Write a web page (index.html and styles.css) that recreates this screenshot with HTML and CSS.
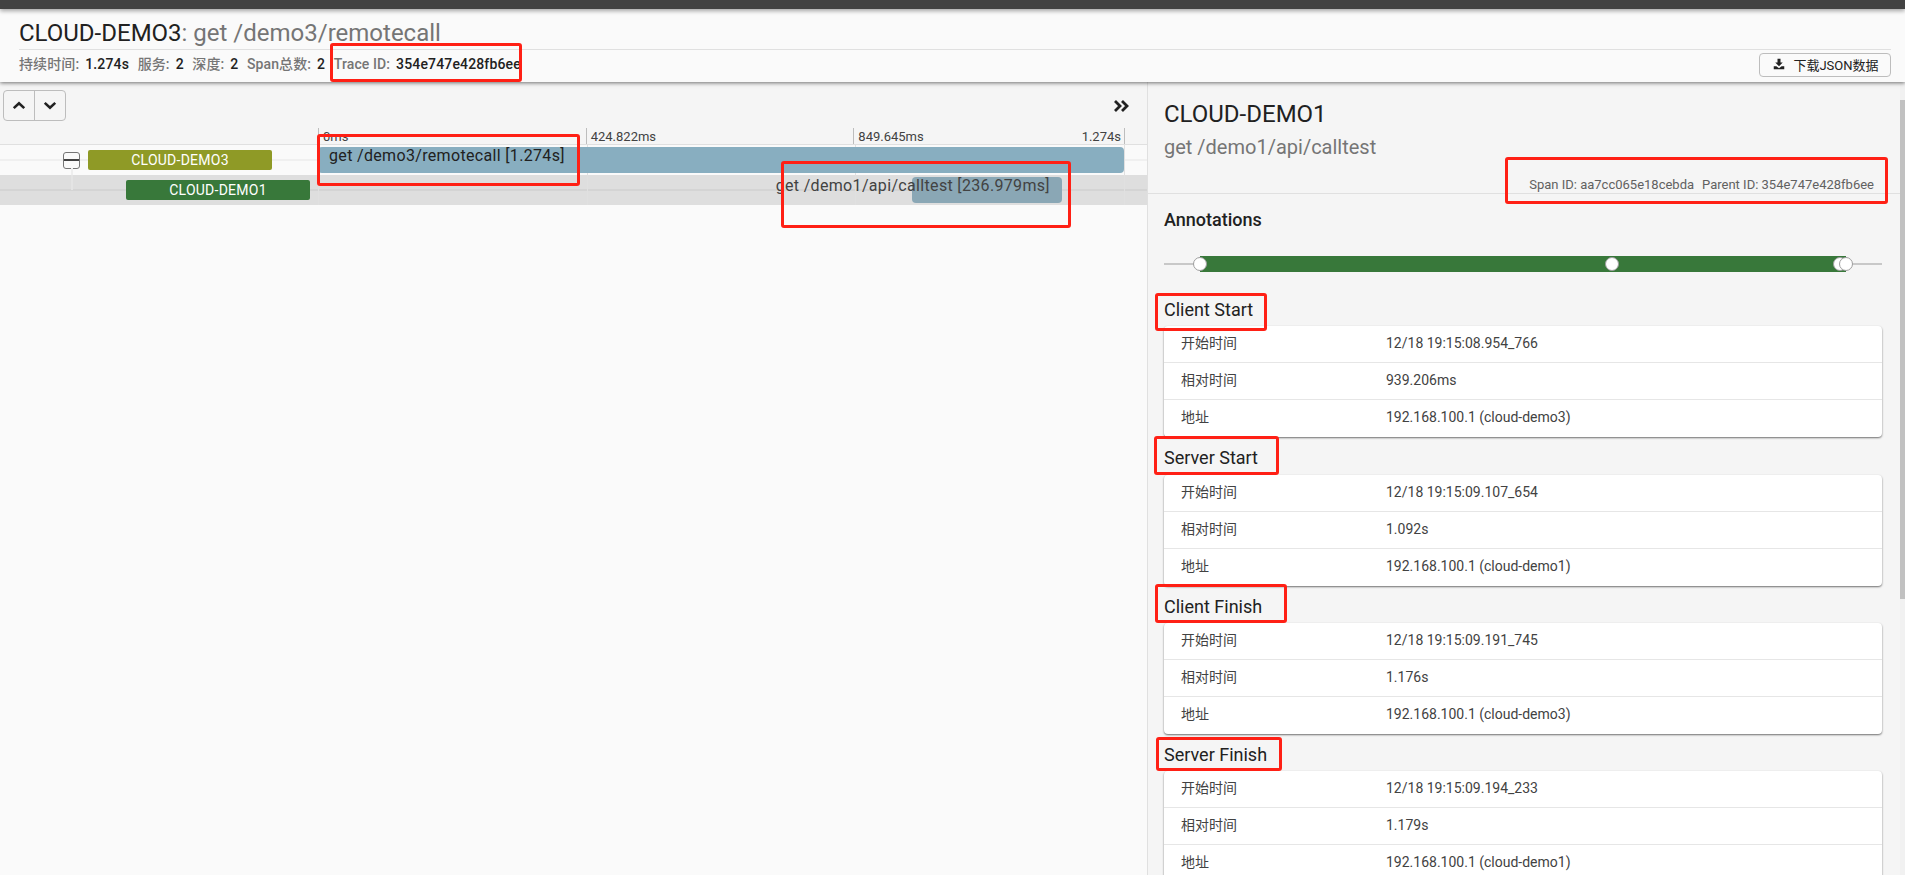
FILE: index.html
```html
<!DOCTYPE html>
<html lang="zh">
<head>
<meta charset="utf-8">
<title>CLOUD-DEMO3: get /demo3/remotecall</title>
<link rel="stylesheet" href="styles.css">
</head>
<body>
<div class="topbar"></div>
<header class="header">
  <h1 class="title"><span class="service">CLOUD-DEMO3</span>: get /demo3/remotecall</h1>
  <div class="meta-row">
    <div class="meta">
      <span class="key">持续时间:</span><b class="val">1.274s</b>
      <span class="key">服务:</span><b class="val">2</b>
      <span class="key">深度:</span><b class="val">2</b>
      <span class="key">Span总数:</span><b class="val">2</b>
      <span class="key">Trace ID:</span><b class="val">354e747e428fb6ee</b>
    </div>
    <button class="download">
      <svg class="dl-icon" viewBox="0 0 16 16"><path d="M6 1h4v5h3l-5 5-5-5h3z"/><path d="M1 11h3.5l3.5 2.5 3.5-2.5H15v4H1z"/></svg>
      下载JSON数据
    </button>
  </div>
</header>
<main class="main">
  <section class="timeline">
    <div class="tl-head">
      <div class="tl-tools">
        <div class="btn-group">
          <button class="nav-btn"><svg viewBox="0 0 16 10"><path d="M2 8l6-5.5L14 8" /></svg></button>
          <button class="nav-btn"><svg viewBox="0 0 16 10"><path d="M2 2l6 5.5L14 2" /></svg></button>
        </div>
        <svg class="collapse" viewBox="0 0 16 14"><path d="M2 2l5 5-5 5M9 2l5 5-5 5"/></svg>
      </div>
      <div class="ruler">
        <div class="tick">0ms</div>
        <div class="tick">424.822ms</div>
        <div class="tick tick-last"><span>849.645ms</span><span>1.274s</span></div>
      </div>
    </div>
    <div class="row row-root">
      <div class="row-label">
        <span class="toggle"></span>
        <span class="tree-h"></span>
        <span class="tree-v"></span>
        <span class="badge badge-olive">CLOUD-DEMO3</span>
      </div>
      <div class="canvas">
        <div class="bar bar-root" style="left:0%;width:100%"><span class="bar-text">get /demo3/remotecall [1.274s]</span></div>
      </div>
    </div>
    <div class="row row-child">
      <div class="row-label">
        <span class="tree-v2"></span>
        <span class="badge badge-green">CLOUD-DEMO1</span>
      </div>
      <div class="canvas">
        <div class="bar bar-child" style="left:73.7%;width:18.6%"><span class="bar-text">get /demo1/api/calltest [236.979ms]</span></div>
      </div>
    </div>
  </section>
  <aside class="panel">
    <div class="panel-head">
      <h2 class="p-title">CLOUD-DEMO1</h2>
      <div class="p-sub">get /demo1/api/calltest</div>
      <div class="p-ids"><span>Span ID: aa7cc065e18cebda</span><span>Parent ID: 354e747e428fb6ee</span></div>
    </div>
    <div class="panel-body">
      <h3 class="ann-title">Annotations</h3>
      <div class="ann-line">
        <div class="ann-bar" style="left:5%;width:90%"></div>
        <span class="dot" style="left:5%"></span>
        <span class="dot" style="left:62.4%"></span>
        <span class="dot" style="left:94.2%"></span>
        <span class="dot" style="left:95%"></span>
      </div>
      <div class="ann">
        <h4 class="ann-name">Client Start</h4>
        <div class="card">
          <div class="kv"><span class="k">开始时间</span><span>12/18 19:15:08.954_766</span></div>
          <div class="kv"><span class="k">相对时间</span><span>939.206ms</span></div>
          <div class="kv"><span class="k">地址</span><span>192.168.100.1 (cloud-demo3)</span></div>
        </div>
      </div>
      <div class="ann">
        <h4 class="ann-name">Server Start</h4>
        <div class="card">
          <div class="kv"><span class="k">开始时间</span><span>12/18 19:15:09.107_654</span></div>
          <div class="kv"><span class="k">相对时间</span><span>1.092s</span></div>
          <div class="kv"><span class="k">地址</span><span>192.168.100.1 (cloud-demo1)</span></div>
        </div>
      </div>
      <div class="ann">
        <h4 class="ann-name">Client Finish</h4>
        <div class="card">
          <div class="kv"><span class="k">开始时间</span><span>12/18 19:15:09.191_745</span></div>
          <div class="kv"><span class="k">相对时间</span><span>1.176s</span></div>
          <div class="kv"><span class="k">地址</span><span>192.168.100.1 (cloud-demo3)</span></div>
        </div>
      </div>
      <div class="ann">
        <h4 class="ann-name">Server Finish</h4>
        <div class="card">
          <div class="kv"><span class="k">开始时间</span><span>12/18 19:15:09.194_233</span></div>
          <div class="kv"><span class="k">相对时间</span><span>1.179s</span></div>
          <div class="kv"><span class="k">地址</span><span>192.168.100.1 (cloud-demo1)</span></div>
        </div>
      </div>
    </div>
    <div class="scroll"><span class="scroll-up"></span><span class="scroll-thumb"></span><span class="scroll-down"></span></div>
  </aside>
</main>
<div class="mark mark-trace"></div>
<div class="mark mark-root"></div>
<div class="mark mark-child"></div>
<div class="mark mark-ids"></div>
<div class="mark mark-cs"></div>
<div class="mark mark-ss"></div>
<div class="mark mark-cf"></div>
<div class="mark mark-sf"></div>
</body>
</html>
```
FILE: styles.css
```css
* { box-sizing: border-box; }
html, body { margin: 0; height: 875px; overflow: hidden; }
body {
  position: relative;
  display: flex;
  flex-direction: column;
  width: 1905px;
  background: #fafafa;
  color: #212121;
  font-family: Roboto, "Noto Sans CJK SC", sans-serif;
}
.topbar { height: 9px; flex: none; background: #424242; box-shadow: 0 2px 4px rgba(0,0,0,.35); position: relative; z-index: 3; }
.header {
  height: 73px; flex: none; padding: 0 14px 0 19px; background: #fafafa;
  box-shadow: 0 1px 4px rgba(0,0,0,.55); position: relative; z-index: 2;
}
.title {
  margin: 0; height: 41px; padding-top: 9px; font-size: 24px; line-height: 30px; font-weight: 400;
  color: #757575; border-bottom: 1px solid #e0e0e0;
}
.service { color: #212121; }
.meta-row { display: flex; justify-content: space-between; align-items: flex-start; }
.meta { font-size: 14px; letter-spacing: .1px; line-height: 18px; padding-top: 5px; white-space: nowrap; color: #757575; font-weight: 500; }
.key { margin-right: 6px; }
.val { color: #212121; font-weight: 500; letter-spacing: .15px; margin-right: 5px; }
.download {
  display: flex; align-items: center; justify-content: center; gap: 8px;
  width: 132px; height: 24px; margin-top: 3px; padding: 0 0 2px 2px;
  background: #fafafa; border: 1px solid #bdbdbd; border-radius: 4px;
  font: 400 13px Roboto, "Noto Sans CJK SC", sans-serif; color: #212121;
}
.dl-icon { width: 12px; height: 12px; fill: #212121; }
.main { flex: 1; min-height: 0; display: flex; }
.timeline { width: 1147px; flex: none; }
.tl-head { height: 63px; background: #f5f5f5; border-bottom: 1px solid #e0e0e0; display: flex; flex-direction: column; justify-content: space-between; }
.tl-tools { display: flex; justify-content: space-between; align-items: center; padding: 8px 18px 0 3px; }
.btn-group { display: flex; width: 63px; height: 31px; border: 1px solid #bdbdbd; border-radius: 4px; }
.nav-btn { flex: 1; padding: 0; background: none; border: 0; display: flex; align-items: center; justify-content: center; }
.nav-btn + .nav-btn { border-left: 1px solid #bdbdbd; }
.nav-btn svg { width: 14px; height: 9px; fill: none; stroke: #212121; stroke-width: 3; }
.collapse { width: 16px; height: 14px; fill: none; stroke: #212121; stroke-width: 2.8; }
.ruler { display: flex; margin-left: 318px; width: 807px; height: 16px; font-size: 13px; line-height: 18px; color: #424242; }
.tick { flex: 1; border-left: 1px solid #bdbdbd; padding-left: 4px; }
.tick-last { display: flex; justify-content: space-between; border-right: 1px solid #bdbdbd; padding-right: 3px; }
.row { display: flex; position: relative; }
.row-root { height: 30px; background: linear-gradient(#f0f0f0,#f0f0f0) 0 14px / 100% 2px no-repeat, #fafafa; }
.row-child { height: 30px; background: linear-gradient(#d4d4d4,#d4d4d4) 0 14px / 100% 2px no-repeat, #dedede; }
.row-label { width: 318px; flex: none; position: relative; }
.badge {
  position: absolute; top: 5px; width: 184px; height: 20px; border-radius: 2px;
  font-size: 14px; letter-spacing: .25px; line-height: 20px; color: #fff; text-align: center;
}
.badge-olive { left: 88px; background: #8f9a26; }
.badge-green { left: 126px; background: #38783a; }
.toggle { position: absolute; left: 63px; top: 7px; width: 17px; height: 17px; background: linear-gradient(#424242,#424242) 0 6px / 100% 2px no-repeat, #fafafa; border: 1px solid #757575; border-radius: 3px; }
.tree-h { position: absolute; left: 80px; top: 14px; width: 8px; height: 2px; background: #eeeeee; }
.tree-v { position: absolute; left: 71px; top: 23px; width: 2px; height: 7px; background: #eeeeee; }
.tree-v2 { position: absolute; left: 71px; top: 0; width: 2px; height: 15px; background: #e4e4e4; }
.canvas {
  width: 807px; flex: none; position: relative;
  background: repeating-linear-gradient(90deg, #e0e0e0 0 1px, transparent 1px 268.67px);
  border-right: 1px solid #e0e0e0;
}
.bar { position: absolute; border-radius: 4px; }
.bar-root { top: 2px; height: 26px; background: #88aec0; }
.bar-child { top: 2px; height: 26px; background: #8aa7b5; }
.bar-text { position: absolute; top: -1px; white-space: nowrap; font-size: 16px; letter-spacing: .33px; line-height: 20px; color: #424242; }
.bar-root .bar-text { left: 11px; color: #212121; }
.bar-child .bar-text { right: 12px; }
.panel { flex: 1; min-width: 0; position: relative; background: #f5f5f5; border-left: 1px solid #e0e0e0; overflow: hidden; }
.panel-head { height: 112px; padding: 0 31px 0 16px; border-bottom: 1px solid #e0e0e0; }
.p-title { margin: 0; padding-top: 17px; font-size: 24px; line-height: 30px; font-weight: 400; }
.p-sub { font-size: 20px; line-height: 24px; padding-top: 6px; color: #757575; }
.p-ids { display: flex; justify-content: flex-end; gap: 8px; font-size: 13px; line-height: 16px; padding-top: 18px; color: #616161; }
.panel-body { padding: 0 23px 0 16px; }
.ann-title { margin: 0; padding-top: 12px; font-size: 18px; line-height: 28px; font-weight: 500; }
.ann-line { position: relative; height: 16px; margin-top: 22px; margin-bottom: 17px; background: linear-gradient(#c8c8c8,#c8c8c8) 0 7px / 100% 2px no-repeat; }
.ann-bar { position: absolute; top: 0; height: 16px; background: #38783a; }
.dot { position: absolute; top: 1px; width: 14px; height: 14px; margin-left: -7px; background: #fff; border: 1px solid #9e9e9e; border-radius: 50%; }
.ann-name { margin: 0; height: 37.3px; padding-top: 6px; font-size: 18px; line-height: 30px; font-weight: 400; }
.card { background: #fff; border-radius: 4px; box-shadow: 0 1px 2px rgba(0,0,0,.55); font-size: 14px; color: #424242; }
.kv { display: flex; height: 37px; line-height: 34px; padding-left: 17px; border-bottom: 1px solid #e6e6e6; }
.kv:last-child { border-bottom: 0; }
.k { width: 205px; flex: none; }
.scroll { position: absolute; right: 0; top: 0; bottom: 0; width: 5px; background: #f1f1f1; display: flex; flex-direction: column; }
.scroll-up { height: 18px; }
.scroll-thumb { height: 499px; background: #c1c1c1; }
.mark { position: absolute; z-index: 5; border: 3px solid #ff2015; border-radius: 3px; }
.mark-trace { left: 330px; top: 43px; width: 192px; height: 39px; }
.mark-root { left: 317px; top: 134px; width: 263px; height: 52px; }
.mark-child { left: 781px; top: 161px; width: 290px; height: 67px; }
.mark-ids { left: 1505px; top: 157px; width: 383px; height: 47px; }
.mark-cs { left: 1155px; top: 293px; width: 112px; height: 38px; }
.mark-ss { left: 1154px; top: 436px; width: 125px; height: 39px; }
.mark-cf { left: 1155px; top: 584px; width: 132px; height: 39px; }
.mark-sf { left: 1156px; top: 737px; width: 126px; height: 34px; }
```
